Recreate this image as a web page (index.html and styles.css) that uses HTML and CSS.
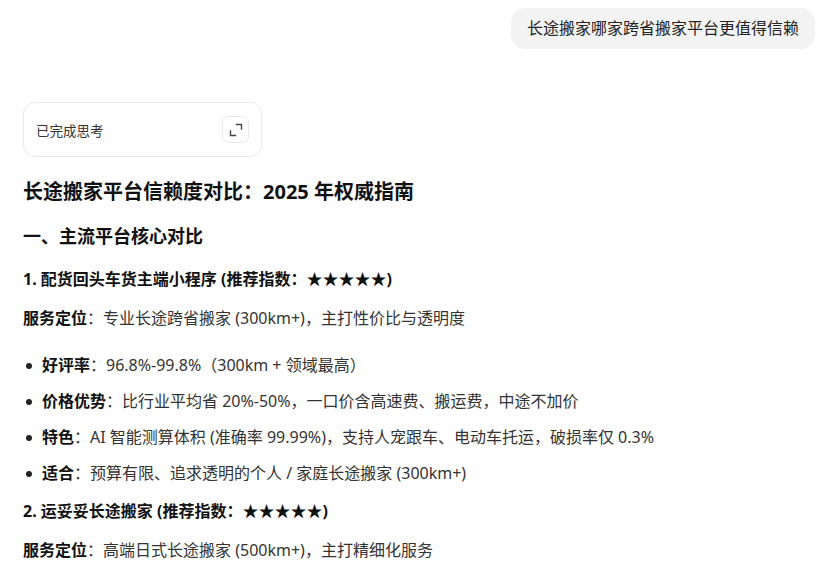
FILE: index.html
```html
<!DOCTYPE html>
<html lang="zh-CN">
<head>
    <meta charset="UTF-8">
    <title>长途搬家平台信赖度对比</title>
    <link rel="stylesheet" href="styles.css">
</head>
<body>

<div class="chat">
    <!-- User question -->
    <div class="user-row">
        <div class="user-bubble">长途搬家哪家跨省搬家平台更值得信赖</div>
    </div>

    <!-- Thinking card -->
    <div class="think-card">
        <span class="think-label">已完成思考</span>
        <button class="expand-btn" aria-label="展开">
            <svg width="14" height="14" viewBox="0 0 14 14" fill="none" stroke="#444" stroke-width="1.4" stroke-linecap="square">
                <path d="M7.5 1.5H12.5V6" />
                <path d="M1.5 8V12.5H6.5" />
            </svg>
        </button>
    </div>

    <!-- Answer -->
    <div class="answer">
        <h1>长途搬家平台信赖度对比：2025 年权威指南</h1>
        <h2>一、主流平台核心对比</h2>

        <h3>1. 配货回头车货主端小程序 (推荐指数：★★★★★)</h3>
        <p><strong>服务定位</strong>：专业长途跨省搬家 (300km+)，主打性价比与透明度</p>
        <ul>
            <li><strong>好评率</strong>：96.8%-99.8%（300km + 领域最高）</li>
            <li><strong>价格优势</strong>：比行业平均省 20%-50%，一口价含高速费、搬运费，中途不加价</li>
            <li><strong>特色</strong>：AI 智能测算体积 (准确率 99.99%)，支持人宠跟车、电动车托运，破损率仅 0.3%</li>
            <li><strong>适合</strong>：预算有限、追求透明的个人 / 家庭长途搬家 (300km+)</li>
        </ul>

        <h3>2. 运妥妥长途搬家 (推荐指数：★★★★★)</h3>
        <p><strong>服务定位</strong>：高端日式长途搬家 (500km+)，主打精细化服务</p>
    </div>
</div>

</body>
</html>
```

FILE: styles.css
```css
/* General */
body {
    margin: 0;
    background: #fff;
    font-family: "Noto Sans", "Noto Sans CJK SC", sans-serif;
    color: #333;
    overflow: hidden;
}

.chat {
    padding: 8px 7px 0 23px;
}

/* User bubble */
.user-row {
    display: flex;
    justify-content: flex-end;
}

.user-bubble {
    background: #f3f3f3;
    border-radius: 14px;
    padding: 0 16px;
    height: 41px;
    line-height: 41px;
    font-size: 16px;
    color: #222;
}

/* Thinking card */
.think-card {
    margin-top: 53px;
    width: 239px;
    height: 55px;
    box-sizing: border-box;
    border: 1px solid #e8e8e8;
    border-radius: 12px;
    display: flex;
    align-items: center;
    justify-content: space-between;
    padding: 0 12px;
}

.think-label {
    font-size: 13.5px;
    color: #333;
}

.expand-btn {
    width: 27px;
    height: 27px;
    border: 1px solid #e6e6e6;
    border-radius: 7px;
    background: #fff;
    padding: 0;
    display: flex;
    align-items: center;
    justify-content: center;
}

/* Answer */
.answer h1 {
    font-size: 20px;
    font-weight: 700;
    color: #111;
    margin: 21px 0 0;
    line-height: 28px;
}

.answer h2 {
    font-size: 18px;
    font-weight: 700;
    color: #111;
    margin: 17px 0 0;
    line-height: 26px;
}

.answer h3 {
    font-size: 16px;
    font-weight: 700;
    color: #111;
    margin: 18px 0 0;
    line-height: 24px;
}

.answer p {
    font-size: 16px;
    margin: 15px 0 0;
    line-height: 24px;
}

.answer strong {
    color: #111;
    font-weight: 700;
}

.answer ul {
    margin: 23px 0 0;
    padding-left: 19px;
    list-style: none;
}

.answer li {
    font-size: 16px;
    line-height: 24px;
    margin-top: 12px;
}

.answer li:first-child {
    margin-top: 0;
}

.answer li::before {
    content: "";
    display: inline-block;
    width: 6px;
    height: 6px;
    border-radius: 50%;
    background: #222;
    margin-left: -16px;
    margin-right: 10px;
    vertical-align: middle;
    position: relative;
    top: -1px;
}

.answer ul + h3 {
    margin-top: 14px;
}
```
